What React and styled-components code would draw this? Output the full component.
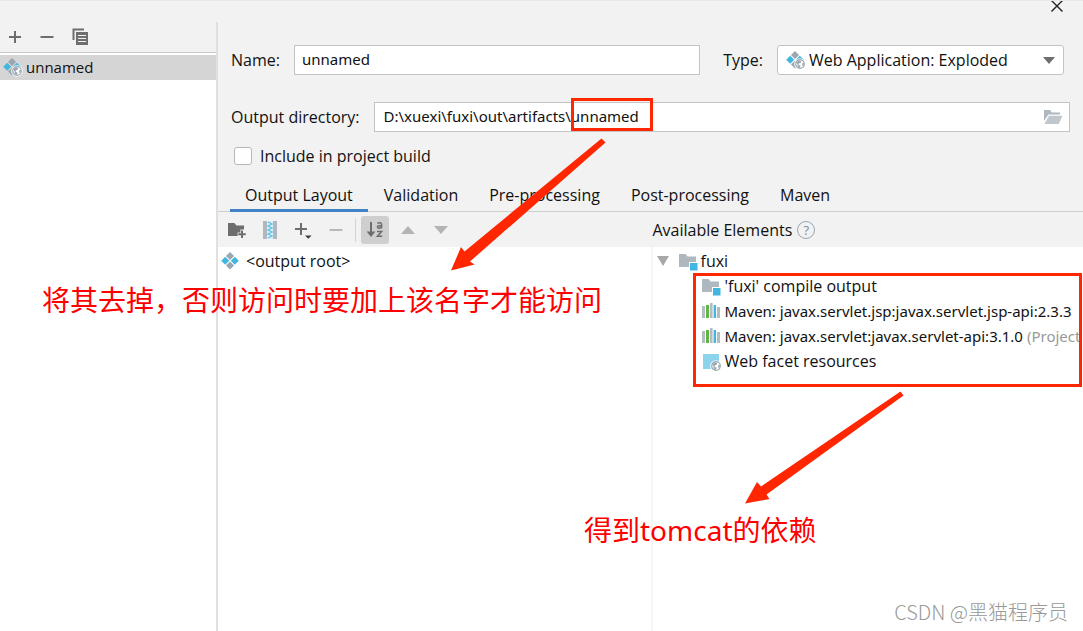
import React, { useState } from "react";
import styled, { createGlobalStyle } from "styled-components";

const TABS = [
  "Output Layout",
  "Validation",
  "Pre-processing",
  "Post-processing",
  "Maven",
];

const ELEMENTS = [
  { icon: "module", name: "'fuxi' compile output" },
  { icon: "library", name: "Maven: javax.servlet.jsp:javax.servlet.jsp-api:2.3.3" },
  { icon: "library", name: "Maven: javax.servlet:javax.servlet-api:3.1.0", note: "(Project Library)" },
  { icon: "web", name: "Web facet resources" },
];

function Globe({ x, y }) {
  return (
    <g transform={`translate(${x} ${y})`}>
      <circle cx="5" cy="5" r="5.8" fill="#fff" />
      <circle cx="5" cy="5" r="4.3" fill="#fff" stroke="#9aa7b0" strokeWidth="1.2" />
      <path d="M1.4 3.2 L4 1.2 L6.4 2.2 L5.4 4 L3.6 4.6 L3.8 6 L5.6 6.6 L4.8 9 L2.8 7.4 L2.4 5.2 Z M7.2 4.2 L9 4 L8.4 7 L7.2 6.4 Z" fill="#9aa7b0" />
    </g>
  );
}

function ArtifactIcon({ web }) {
  return (
    <svg width="20" height="20" viewBox="0 0 20 20" aria-hidden="true">
      <path d="M9 1 L13 5 L9 9 L5 5 Z" fill="#9aa7b0" />
      <path d="M4.2 5.8 L8.2 9.8 L4.2 13.8 L0.2 9.8 Z" fill="#40b6e0" />
      <path d="M13.8 5.8 L17.8 9.8 L13.8 13.8 L9.8 9.8 Z" fill="#40b6e0" />
      <path d="M9 10.6 L13 14.6 L9 18.6 L5 14.6 Z" fill="#9aa7b0" />
      {web && <Globe x={9} y={9} />}
    </svg>
  );
}

function ModuleIcon() {
  return (
    <svg width="20" height="20" viewBox="0 0 20 20" aria-hidden="true">
      <path d="M1 3 H7.6 L9.6 5.4 H18 V16 H1 Z" fill="#afb8bf" />
      <rect x="11" y="11" width="9" height="9" fill="#fff" />
      <rect x="12" y="12" width="7.5" height="7.5" fill="#40b6e0" />
    </svg>
  );
}

function LibraryIcon() {
  return (
    <svg width="20" height="20" viewBox="0 0 20 20" aria-hidden="true">
      <path d="M1 5 H4 V17 H1 Z M9 2 H11.6 V17 H9 Z M16 6 H19 V17 H16 Z" fill="#b4bcc3" />
      <path d="M5 4 H8 V17 H5 Z" fill="#62b543" />
      <path d="M12.6 4 H15 V17 H12.6 Z" fill="#40b6e0" />
    </svg>
  );
}

function WebIcon() {
  return (
    <svg width="20" height="20" viewBox="0 0 20 20" aria-hidden="true">
      <rect x="2" y="3" width="16" height="15" fill="#8cd3ec" />
      <Globe x={10} y={10} />
    </svg>
  );
}

const ICONS = { module: ModuleIcon, library: LibraryIcon, web: WebIcon };

function PlusIcon() {
  return (
    <svg width="14" height="14" viewBox="0 0 14 14" aria-hidden="true">
      <path d="M7 1 V13 M1 7 H13" stroke="#6e6e6e" strokeWidth="2" />
    </svg>
  );
}

function MinusIcon({ color = "#6e6e6e" }) {
  return (
    <svg width="14" height="14" viewBox="0 0 14 14" aria-hidden="true">
      <path d="M0.5 7 H13.5" stroke={color} strokeWidth="2" />
    </svg>
  );
}

function CopyIcon() {
  return (
    <svg width="18" height="18" viewBox="0 0 18 18" aria-hidden="true">
      <path d="M1.5 12 V1.5 H12" fill="none" stroke="#6e6e6e" strokeWidth="2" />
      <path d="M4 4 H16 V17 H4 Z" fill="#6e6e6e" />
      <path d="M6 7.5 H14 M6 10.5 H14 M6 13.5 H14" stroke="#f2f2f2" strokeWidth="1.2" />
    </svg>
  );
}

function NewFolderIcon() {
  return (
    <svg width="18" height="18" viewBox="0 0 18 18" aria-hidden="true">
      <path d="M0 2 H6.4 L8.4 4.4 H16 V8.6 H12.4 V11.4 H9.6 V15 H0 Z" fill="#6e6e6e" />
      <path d="M14 9.4 V17 M10.2 13.2 H17.8" stroke="#6e6e6e" strokeWidth="2" />
    </svg>
  );
}

function ArchiveIcon() {
  return (
    <svg width="14" height="18" viewBox="0 0 14 18" aria-hidden="true">
      <path d="M0 0 H4 V18 H0 Z M10 0 H14 V18 H10 Z" fill="#afb8bf" />
      <path d="M4 0 H10 V18 H4 Z" fill="#d9eef6" />
      <path d="M5 1 L9 3 L5 5 L9 7 L5 9 L9 11 L5 13 L9 15 L5 17" fill="none" stroke="#5fc1e4" strokeWidth="1.2" />
    </svg>
  );
}

function AddMenuIcon() {
  return (
    <svg width="18" height="18" viewBox="0 0 18 18" aria-hidden="true">
      <path d="M7 2 V14 M1 8 H13" stroke="#6e6e6e" strokeWidth="2" />
      <path d="M11 14.4 H17.6 L14.3 17.8 Z" fill="#3c3c3c" />
    </svg>
  );
}

function SortIcon() {
  return (
    <svg width="18" height="18" viewBox="0 0 18 18" aria-hidden="true">
      <path d="M5 1 V13" stroke="#6e6e6e" strokeWidth="2" />
      <path d="M0.6 10.6 H9.4 L5 16 Z" fill="#6e6e6e" />
      <path d="M11.4 2.4 C13 1.4 15.6 1.2 15.6 3.4 V7.4 M15.6 4.4 C13 4.4 11.4 4.6 11.4 6 C11.4 7.6 14.4 7.6 15.6 5.6" fill="none" stroke="#6e6e6e" strokeWidth="1.5" />
      <path d="M11 10.6 H15.6 L11.4 15.2 H16.2" fill="none" stroke="#6e6e6e" strokeWidth="1.5" />
    </svg>
  );
}

function Triangle({ up, color = "#b4b4b4", size = 14, height = 8 }) {
  return (
    <svg width={size} height={height} viewBox="0 0 14 8" preserveAspectRatio="none" aria-hidden="true">
      <path d={up ? "M0 8 H14 L7 0 Z" : "M0 0 H14 L7 8 Z"} fill={color} />
    </svg>
  );
}

function OpenFolderIcon() {
  return (
    <svg width="20" height="16" viewBox="0 0 20 16" aria-hidden="true">
      <path d="M1 1 H7 L9 3.4 H17 V5.4 H5.4 L1 12 Z" fill="#afb8bf" />
      <path d="M6 6.8 H19.4 L15.8 15 H1.4 Z" fill="#c0c7cc" />
    </svg>
  );
}

export default function ArtifactsDialog() {
  const [name, setName] = useState("unnamed");
  const [dir, setDir] = useState("D:\\xuexi\\fuxi\\out\\artifacts\\unnamed");
  const [include, setInclude] = useState(false);
  const [tab, setTab] = useState("Output Layout");

  return (
    <S.Dialog>
      <GlobalStyle />
      <S.TitleBar>
        <S.CloseButton type="button" aria-label="Close">
          <svg width="12" height="12" viewBox="0 0 12 12" aria-hidden="true">
            <path d="M0.5 -0.5 L11.5 10.5 M11.5 -0.5 L0.5 10.5" stroke="#222" strokeWidth="1.4" />
          </svg>
        </S.CloseButton>
      </S.TitleBar>

      <S.Body>
        <S.Sidebar>
          <S.SidebarTools>
            <S.IconButton type="button" aria-label="Add"><PlusIcon /></S.IconButton>
            <S.IconButton type="button" aria-label="Remove"><MinusIcon /></S.IconButton>
            <S.IconButton type="button" aria-label="Copy"><CopyIcon /></S.IconButton>
          </S.SidebarTools>
          <S.Artifact type="button">
            <ArtifactIcon web />
            unnamed
          </S.Artifact>
        </S.Sidebar>

        <S.Main>
          <S.Form>
            <S.NameRow>
              <S.Label htmlFor="name">Name:</S.Label>
              <S.Input id="name" value={name} onChange={(e) => setName(e.target.value)} />
              <S.TypeLabel htmlFor="type">Type:</S.TypeLabel>
              <S.SelectBox>
                <ArtifactIcon web />
                <S.Select id="type">
                  <option>Web Application: Exploded</option>
                  <option>Web Application: Archive</option>
                </S.Select>
                <Triangle color="#6e6e6e" size={12} height={7} />
              </S.SelectBox>
            </S.NameRow>

            <S.DirRow>
              <S.Label htmlFor="dir">Output directory:</S.Label>
              <S.DirBox>
                <S.DirInput id="dir" value={dir} onChange={(e) => setDir(e.target.value)} />
                <S.IconButton type="button" aria-label="Browse"><OpenFolderIcon /></S.IconButton>
              </S.DirBox>
            </S.DirRow>

            <S.CheckRow>
              <S.Checkbox
                type="checkbox"
                checked={include}
                onChange={(e) => setInclude(e.target.checked)}
              />
              Include in project build
            </S.CheckRow>
          </S.Form>

          <S.Tabs role="tablist">
            {TABS.map((t) => (
              <S.Tab key={t} type="button" role="tab" aria-selected={t === tab} $active={t === tab} onClick={() => setTab(t)}>
                {t}
              </S.Tab>
            ))}
          </S.Tabs>

          <S.Panels>
            <S.Panel>
              <S.LayoutTools>
                <S.Tool type="button" aria-label="Create directory"><NewFolderIcon /></S.Tool>
                <S.Tool type="button" aria-label="Create archive"><ArchiveIcon /></S.Tool>
                <S.Tool type="button" aria-label="Add copy of"><AddMenuIcon /></S.Tool>
                <S.Tool type="button" aria-label="Remove"><MinusIcon color="#b8b8b8" /></S.Tool>
                <S.Separator />
                <S.Tool type="button" aria-label="Sort by name" $pressed><SortIcon /></S.Tool>
                <S.Tool type="button" aria-label="Move up"><Triangle up /></S.Tool>
                <S.Tool type="button" aria-label="Move down"><Triangle /></S.Tool>
              </S.LayoutTools>
              <S.Tree>
                <S.OutputRoot>
                  <ArtifactIcon />
                  &lt;output root&gt;
                </S.OutputRoot>
              </S.Tree>
            </S.Panel>

            <S.Panel>
              <S.ElementsHeader>
                Available Elements
                <S.Help type="button" aria-label="Help">?</S.Help>
              </S.ElementsHeader>
              <S.Tree $divided>
                <S.ModuleRow>
                  <Triangle color="#a8a8a8" size={12} height={10} />
                  <S.NodeLabel>
                    <ModuleIcon />
                    fuxi
                  </S.NodeLabel>
                </S.ModuleRow>
                {ELEMENTS.map(({ icon, name: label, note }) => {
                  const Icon = ICONS[icon];
                  return (
                    <S.ElementRow key={label} $library={icon === "library"}>
                      <Icon />
                      {label}
                      {note && <S.Note>{note}</S.Note>}
                    </S.ElementRow>
                  );
                })}
              </S.Tree>
            </S.Panel>
          </S.Panels>
        </S.Main>
      </S.Body>

      {/* tutorial marks drawn over the dialog */}
      <S.Frame $x={571} $y={98} $w={82} $h={33} />
      <S.Frame $x={693} $y={273} $w={389} $h={114} />
      <S.Arrows width="1083" height="631" viewBox="0 0 1083 631" aria-hidden="true">
        <path d="M601.5 138.5 L605.5 142.5 L470 261.5 L474.5 264.5 L451 270.5 L461 247 L464.5 251.5 Z" />
        <path d="M900.5 391.5 L903.5 395.5 L766.5 494.5 L769.5 499 L745 503.5 L757 482 L761 486.5 Z" />
      </S.Arrows>
      <S.Remark $x={42} $y={280}>将其去掉，否则访问时要加上该名字才能访问</S.Remark>
      <S.Remark $x={584} $y={510}>得到tomcat的依赖</S.Remark>
      <S.Watermark>CSDN @黑猫程序员</S.Watermark>
    </S.Dialog>
  );
}

const GlobalStyle = createGlobalStyle`
  * {
    box-sizing: border-box;
  }
  body {
    margin: 0;
    background: #f2f2f2;
    color: #111;
    font: 16px/20px "Open Sans", "Noto Sans CJK SC", sans-serif;
  }
  button, input, select {
    margin: 0;
    padding: 0;
    border: 0;
    background: none;
    color: inherit;
    font: inherit;
    outline: none;
  }
  svg {
    display: block;
    flex: none;
  }
`;

const Row = styled.div`
  display: flex;
  align-items: center;
  height: 25px;
  white-space: nowrap;
`;

const Input = styled.input`
  flex: 1;
  min-width: 0;
  height: 30px;
  padding: 0 7px 2px;
  border: 1px solid #c4c4c4;
  background: #fff;
  font-family: "Noto Sans", sans-serif;
  font-size: 15px;
`;

const S = {
  Dialog: styled.div`
    position: relative;
    display: flex;
    flex-direction: column;
    min-height: 100vh;
    overflow: hidden;
  `,
  TitleBar: styled.div`
    display: flex;
    justify-content: flex-end;
    height: 22px;
    padding-right: 20px;
    border-top: 1px solid #e8e8e8;
  `,
  CloseButton: styled.button`
    display: flex;
    align-items: flex-start;
  `,
  Body: styled.div`
    flex: 1;
    display: grid;
    grid-template-columns: 218px minmax(0, 1fr);
  `,
  Sidebar: styled.div`
    border-right: 2px solid #e0e0e0;
    background: #fff;
  `,
  SidebarTools: styled.div`
    display: flex;
    align-items: center;
    gap: 18px;
    height: 31px;
    padding: 0 8px;
    border-bottom: 1px solid #c8c8c8;
    background: #f2f2f2;
  `,
  IconButton: styled.button`
    display: flex;
    align-items: center;
  `,
  Artifact: styled.button`
    display: flex;
    align-items: center;
    gap: 3px;
    width: 100%;
    height: 25px;
    margin-top: 2px;
    padding: 0 0 2px 3px;
    background: #d5d5d5;
    font-size: 15px;
  `,
  Main: styled.div`
    display: flex;
    flex-direction: column;
    min-width: 0;
  `,
  Form: styled.form`
    padding: 23px 13px 0;
  `,
  NameRow: styled.div`
    display: flex;
    align-items: center;
    padding-right: 6px;
  `,
  Label: styled.label`
    margin-right: 14px;
    white-space: nowrap;
  `,
  TypeLabel: styled.label`
    margin: 0 14px 0 23px;
  `,
  Input,
  SelectBox: styled.div`
    display: flex;
    align-items: center;
    width: 287px;
    height: 30px;
    padding: 0 8px;
    border: 1px solid #c4c4c4;
    border-radius: 3px;
    background: #fff;
  `,
  Select: styled.select`
    flex: 1;
    min-width: 0;
    padding-left: 3px;
    appearance: none;
  `,
  DirRow: styled.div`
    display: flex;
    align-items: center;
    margin-top: 27px;
  `,
  DirBox: styled.div`
    flex: 1;
    display: flex;
    align-items: center;
    padding-right: 6px;
    border: 1px solid #c4c4c4;
    background: #fff;
  `,
  DirInput: styled(Input)`
    height: 28px;
    padding: 0 9px 2px;
    border: 0;
  `,
  CheckRow: styled.label`
    display: flex;
    align-items: center;
    gap: 8px;
    width: max-content;
    margin: 14px 0 0 3px;
  `,
  Checkbox: styled.input`
    width: 18px;
    height: 18px;
    border: 1px solid #b8b8b8;
    border-radius: 3px;
    background: #fff;
    appearance: none;
    &:checked {
      background: #3d85c9;
    }
  `,
  Tabs: styled.div`
    display: flex;
    gap: 1px;
    margin-top: 13px;
    padding-left: 12px;
    border-bottom: 1px solid #cfcfcf;
  `,
  Tab: styled.button`
    height: 33px;
    margin-bottom: -1px;
    padding: 2px 15px 0;
    border-bottom: 3px solid ${(p) => (p.$active ? "#4083c9" : "transparent")};
    white-space: nowrap;
    cursor: pointer;
  `,
  Panels: styled.div`
    flex: 1;
    display: grid;
    grid-template-columns: minmax(0, 1fr) minmax(0, 1fr);
  `,
  Panel: styled.div`
    display: flex;
    flex-direction: column;
    min-width: 0;
  `,
  LayoutTools: styled.div`
    display: flex;
    align-items: center;
    gap: 5px;
    height: 35px;
    padding-left: 5px;
  `,
  Tool: styled.button`
    display: flex;
    align-items: center;
    justify-content: center;
    width: 28px;
    height: 28px;
    border-radius: 3px;
    background: ${(p) => (p.$pressed ? "#cfcfcf" : "none")};
  `,
  Separator: styled.div`
    width: 1px;
    height: 24px;
    background: #d4d4d4;
  `,
  Tree: styled.div`
    flex: 1;
    padding-top: 1px;
    border-left: ${(p) => (p.$divided ? "2px solid #f5f5f5" : "0")};
    background: #fff;
    overflow: hidden;
  `,
  OutputRoot: styled(Row)`
    gap: 5px;
    padding-left: 3px;
  `,
  ElementsHeader: styled.div`
    display: flex;
    align-items: center;
    gap: 5px;
    height: 35px;
    padding-left: 2px;
    white-space: nowrap;
  `,
  Help: styled.button`
    width: 18px;
    height: 18px;
    border: 1px solid #9aa7b0;
    border-radius: 50%;
    color: #7f8b94;
    font-size: 13px;
    line-height: 16px;
  `,
  ModuleRow: styled(Row)`
    gap: 9px;
    padding-left: 4px;
  `,
  NodeLabel: styled.span`
    display: flex;
    align-items: center;
    gap: 3px;
  `,
  ElementRow: styled(Row)`
    gap: 4px;
    padding-left: 48px;
    font-family: ${(p) => (p.$library ? '"Noto Sans"' : '"Open Sans"')}, sans-serif;
    font-size: ${(p) => (p.$library ? 15 : 16)}px;
  `,
  Note: styled.span`
    color: #999;
  `,
  Frame: styled.div`
    position: absolute;
    left: ${(p) => p.$x}px;
    top: ${(p) => p.$y}px;
    width: ${(p) => p.$w}px;
    height: ${(p) => p.$h}px;
    border: 3px solid #ff2600;
    pointer-events: none;
  `,
  Arrows: styled.svg`
    position: absolute;
    left: 0;
    top: 0;
    fill: #ff2600;
    pointer-events: none;
  `,
  Remark: styled.div`
    position: absolute;
    left: ${(p) => p.$x}px;
    top: ${(p) => p.$y}px;
    color: #ff0000;
    font-family: "Noto Sans", "Noto Sans CJK SC", sans-serif;
    font-size: 28px;
    line-height: 40px;
    white-space: nowrap;
    pointer-events: none;
  `,
  Watermark: styled.div`
    position: absolute;
    right: 15px;
    bottom: 4px;
    color: #999;
    font-family: "Noto Sans CJK SC", sans-serif;
    font-size: 20px;
    font-weight: 300;
    line-height: 30px;
    white-space: nowrap;
    pointer-events: none;
  `,
};
